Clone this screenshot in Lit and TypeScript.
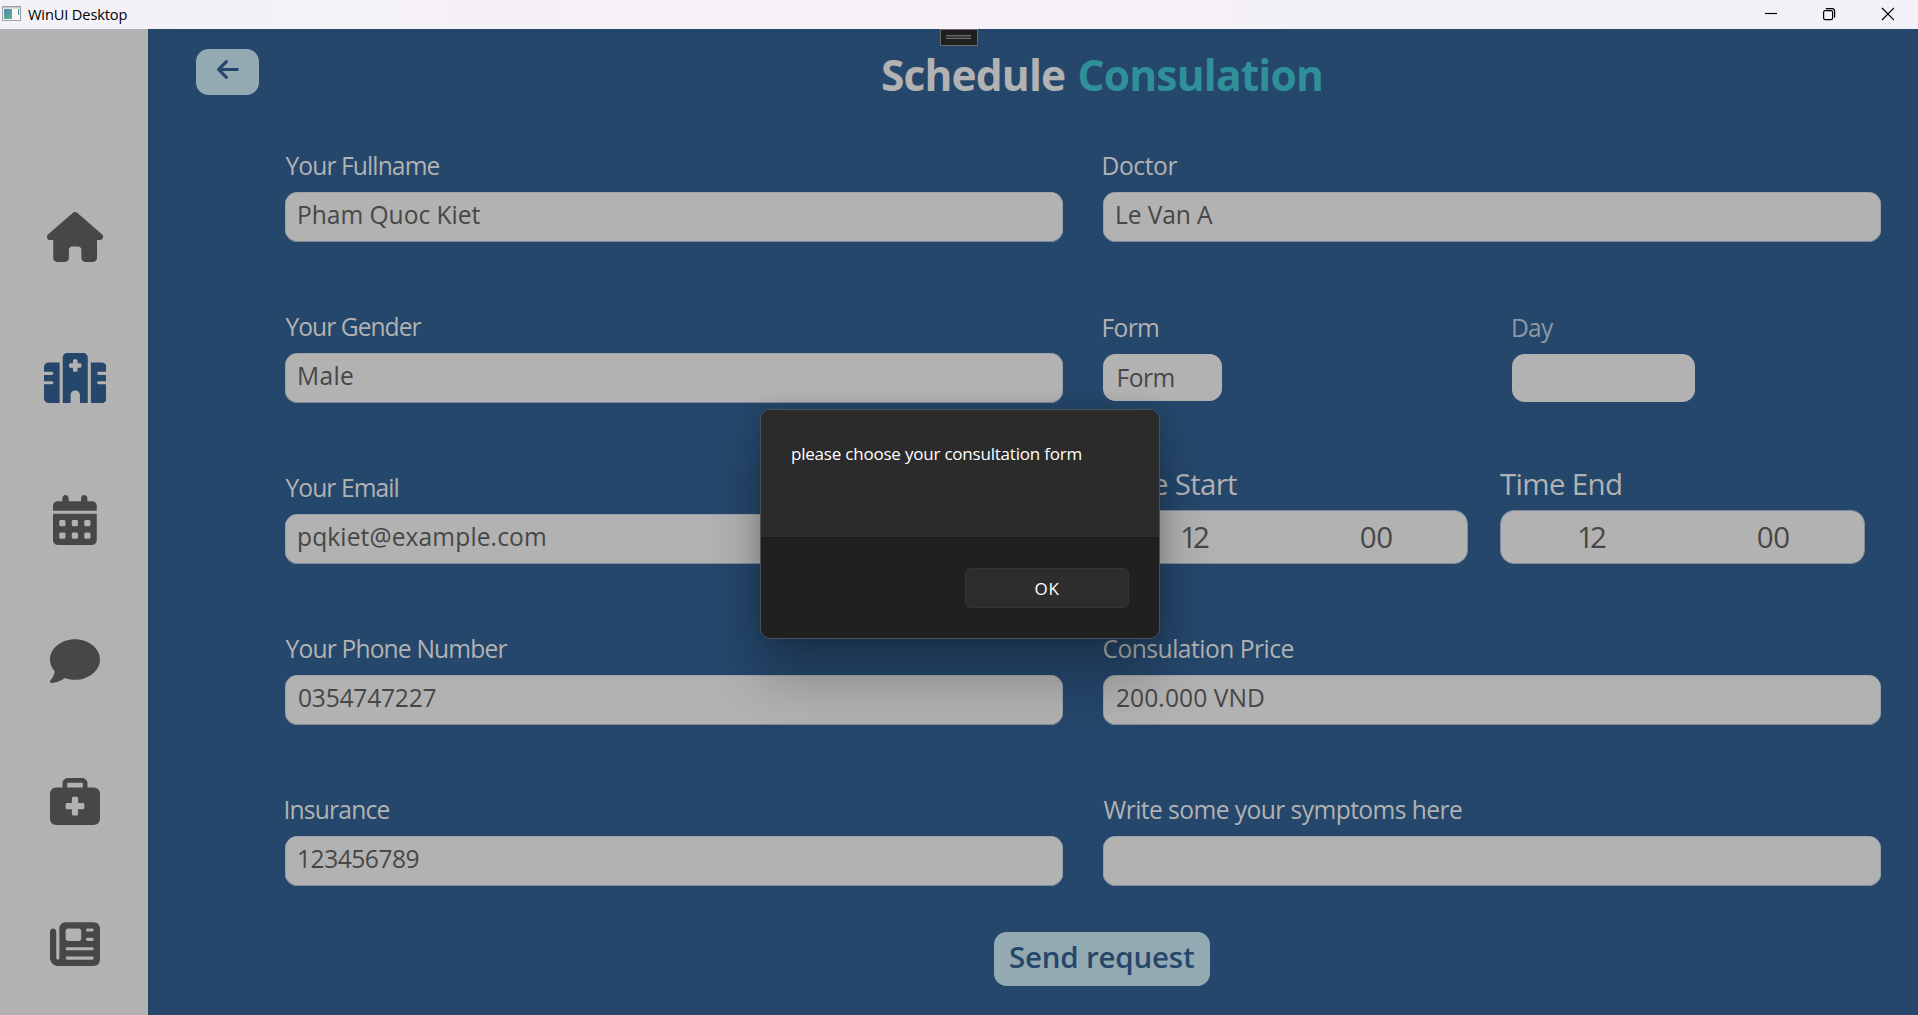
import { LitElement, html, css, svg, nothing } from "lit";

/**
 * A line of text set to a given ink width: the letter spacing is adjusted
 * so that the glyphs run from the left to the right edge of the element.
 */
class FitText extends LitElement {
  static properties = {
    text: { type: String },
    span: { type: Number },
  };
  declare text: string;
  declare span: number;

  static styles = css`
    :host {
      display: block;
      flex: none;
      white-space: pre;
    }
    .run {
      display: inline-block;
    }
  `;

  render() {
    return html`<span class="run">${this.text}</span>`;
  }

  updated() {
    const run = this.renderRoot.querySelector(".run") as HTMLElement;
    const cs = getComputedStyle(this);
    const ctx = document.createElement("canvas").getContext("2d")!;
    ctx.font = `${cs.fontWeight} ${cs.fontSize} ${cs.fontFamily}`;
    const m = ctx.measureText(this.text);
    const ink = m.actualBoundingBoxLeft + m.actualBoundingBoxRight;
    this.style.width = `${this.span}px`;
    run.style.marginLeft = `${m.actualBoundingBoxLeft}px`;
    run.style.letterSpacing = `${(this.span - ink) / Math.max(1, this.text.length - 1)}px`;
  }
}
customElements.define("fit-text", FitText);

const fit = (text: string, span: number) =>
  html`<fit-text .text=${text} .span=${span}></fit-text>`;

interface Icon {
  w: number;
  path: string;
  active?: boolean;
}

const NAV: Icon[] = [
  {
    w: 576,
    path: "M575.8 255.5c0 18-15 32.1-32 32.1h-32l.7 160.2c0 2.7-.2 5.4-.5 8.1V472c0 22.1-17.9 40-40 40H456c-1.1 0-2.2 0-3.3-.1c-1.4 .1-2.8 .1-4.2 .1H416 392c-22.1 0-40-17.9-40-40V448 384c0-17.7-14.3-32-32-32H256c-17.7 0-32 14.3-32 32v64 24c0 22.1-17.9 40-40 40H160 128.1c-1.5 0-3-.1-4.5-.2c-1.2 .1-2.4 .2-3.6 .2H104c-22.1 0-40-17.9-40-40V360c0-.9 0-1.9 .1-2.8V287.6H32c-18 0-32-14-32-32.1c0-9 3-17 10-24L266.4 8c7-7 15-8 22-8s15 2 21 7L564.8 231.5c8 7 12 15 11 24z",
  },
  {
    w: 640,
    active: true,
    path: "M192 48c0-26.5 21.5-48 48-48H400c26.5 0 48 21.5 48 48V512H368V432c0-26.5-21.5-48-48-48s-48 21.5-48 48v80H192V48zM48 96H160V512H48c-26.5 0-48-21.5-48-48V320H80c8.8 0 16-7.2 16-16s-7.2-16-16-16H0V224H80c8.8 0 16-7.2 16-16s-7.2-16-16-16H0V144c0-26.5 21.5-48 48-48zm544 0c26.5 0 48 21.5 48 48v48H560c-8.8 0-16 7.2-16 16s7.2 16 16 16h80v64H560c-8.8 0-16 7.2-16 16s7.2 16 16 16h80V464c0 26.5-21.5 48-48 48H480V96H592zM312 64c-8.8 0-16 7.2-16 16v24H272c-8.8 0-16 7.2-16 16v16c0 8.8 7.2 16 16 16h24v24c0 8.8 7.2 16 16 16h16c8.8 0 16-7.2 16-16V152h24c8.8 0 16-7.2 16-16V120c0-8.8-7.2-16-16-16H344V80c0-8.8-7.2-16-16-16H312z",
  },
  {
    w: 448,
    path: "M128 0c17.7 0 32 14.3 32 32V64H288V32c0-17.7 14.3-32 32-32s32 14.3 32 32V64h48c26.5 0 48 21.5 48 48v48H0V112C0 85.5 21.5 64 48 64H96V32c0-17.7 14.3-32 32-32zM0 192H448V464c0 26.5-21.5 48-48 48H48c-26.5 0-48-21.5-48-48V192zm64 80v32c0 8.8 7.2 16 16 16h32c8.8 0 16-7.2 16-16V272c0-8.8-7.2-16-16-16H80c-8.8 0-16 7.2-16 16zm128 0v32c0 8.8 7.2 16 16 16h32c8.8 0 16-7.2 16-16V272c0-8.8-7.2-16-16-16H208c-8.8 0-16 7.2-16 16zm144-16c-8.8 0-16 7.2-16 16v32c0 8.8 7.2 16 16 16h32c8.8 0 16-7.2 16-16V272c0-8.8-7.2-16-16-16H336zM64 400v32c0 8.8 7.2 16 16 16h32c8.8 0 16-7.2 16-16V400c0-8.8-7.2-16-16-16H80c-8.8 0-16 7.2-16 16zm144-16c-8.8 0-16 7.2-16 16v32c0 8.8 7.2 16 16 16h32c8.8 0 16-7.2 16-16V400c0-8.8-7.2-16-16-16H208zm112 16v32c0 8.8 7.2 16 16 16h32c8.8 0 16-7.2 16-16V400c0-8.8-7.2-16-16-16H336c-8.8 0-16 7.2-16 16z",
  },
  {
    w: 512,
    path: "M512 240c0 114.9-114.6 208-256 208c-37.1 0-72.3-6.4-104.1-17.9c-11.9 8.7-31.3 20.6-54.3 30.6C73.6 471.1 44.7 480 16 480c-6.5 0-12.3-3.9-14.8-9.9c-2.5-6-1.1-12.8 3.4-17.4l0 0 .3-.3c.3-.3 .7-.7 1.3-1.4c1.1-1.2 2.8-3.1 4.9-5.7c4.1-5 9.6-12.4 15.2-21.6c10-16.6 19.5-38.4 21.4-62.9C17.7 326.8 0 285.1 0 240C0 125.1 114.6 32 256 32s256 93.1 256 208z",
  },
  {
    w: 512,
    path: "M184 48H328c4.4 0 8 3.6 8 8V96H176V56c0-4.4 3.6-8 8-8zm-56 8V96H64C28.7 96 0 124.7 0 160V416c0 35.3 28.7 64 64 64H448c35.3 0 64-28.7 64-64V160c0-35.3-28.7-64-64-64H384V56c0-30.9-25.1-56-56-56H184c-30.9 0-56 25.1-56 56zm96 152c0-8.8 7.2-16 16-16h32c8.8 0 16 7.2 16 16v48h48c8.8 0 16 7.2 16 16v32c0 8.8-7.2 16-16 16H288v48c0 8.8-7.2 16-16 16H240c-8.8 0-16-7.2-16-16V320H176c-8.8 0-16-7.2-16-16V272c0-8.8 7.2-16 16-16h48V208z",
  },
  {
    w: 512,
    path: "M96 96c0-35.3 28.7-64 64-64H448c35.3 0 64 28.7 64 64V416c0 35.3-28.7 64-64 64H80c-44.2 0-80-35.8-80-80V128c0-17.7 14.3-32 32-32s32 14.3 32 32V400c0 8.8 7.2 16 16 16s16-7.2 16-16V96zm64 24v80c0 13.3 10.7 24 24 24H296c13.3 0 24-10.7 24-24V120c0-13.3-10.7-24-24-24H184c-13.3 0-24 10.7-24 24zm208-8c0 8.8 7.2 16 16 16h48c8.8 0 16-7.2 16-16s-7.2-16-16-16H384c-8.8 0-16 7.2-16 16zm0 96c0 8.8 7.2 16 16 16h48c8.8 0 16-7.2 16-16s-7.2-16-16-16H384c-8.8 0-16 7.2-16 16zM160 304c0 8.8 7.2 16 16 16H432c8.8 0 16-7.2 16-16s-7.2-16-16-16H176c-8.8 0-16 7.2-16 16zm0 96c0 8.8 7.2 16 16 16H432c8.8 0 16-7.2 16-16s-7.2-16-16-16H176c-8.8 0-16 7.2-16 16z",
  },
];

const ARROW =
  "M9.4 233.4c-12.5 12.5-12.5 32.8 0 45.3l160 160c12.5 12.5 32.8 12.5 45.3 0s12.5-32.8 0-45.3L109.2 288 416 288c17.7 0 32-14.3 32-32s-14.3-32-32-32l-306.7 0L214.6 118.6c12.5-12.5 12.5-32.8 0-45.3s-32.8-12.5-45.3 0l-160 160z";

class AppRoot extends LitElement {
  static styles = css`
    :host {
      display: block;
      position: relative;
      width: 1918px;
      height: 1015px;
      overflow: hidden;
      font-family: "Open Sans", "Noto Sans", sans-serif;
      background: #25476b;
    }
    .window {
      display: flex;
      flex-direction: column;
      height: 100%;
    }
    svg {
      display: block;
      flex: none;
    }

    .titlebar {
      display: flex;
      height: 29px;
      flex: none;
      background: linear-gradient(90deg, #f3f1f8, #f6f1f6 45%, #f6f1f6 62%, #f2f1f8 70%, #f3f1f8);
      color: #000;
      font-size: 14.6px;
      line-height: 29px;
      padding-left: 2px;
    }
    .appicon {
      margin: 6px 7px 0 0;
    }
    .controls {
      margin-left: auto;
      margin-right: 24px;
    }

    .body {
      display: flex;
      flex: 1;
      min-height: 0;
    }
    .sidebar {
      display: flex;
      flex-direction: column;
      align-items: center;
      gap: 91.4px;
      box-sizing: border-box;
      width: 148px;
      flex: none;
      padding: 183px 0 0 2px;
      background: #b2b2b2;
      color: #474747;
    }
    .sidebar .active {
      color: #25476b;
    }

    .main {
      display: flex;
      flex-direction: column;
      flex: 1;
      color: #b2b2b2;
    }
    .header {
      display: flex;
      height: 119px;
      flex: none;
      padding-left: 48px;
    }
    .back {
      display: flex;
      justify-content: center;
      align-items: flex-start;
      box-sizing: border-box;
      width: 63px;
      height: 46px;
      margin-top: 20px;
      padding: 8px 0 0 1px;
      border-radius: 12.5px;
      background: #94aab2;
      color: #25476b;
    }
    .title {
      display: flex;
      gap: 14.5px;
      margin-left: 623px;
      padding-top: 17px;
      font-size: 42.5px;
      line-height: 58px;
      font-weight: 700;
    }
    .accent {
      color: #2f9099;
    }

    .form {
      display: grid;
      grid-template-columns: 778px 778px;
      grid-auto-rows: 94px;
      column-gap: 40px;
      row-gap: 67px;
      padding-left: 137px;
      font-size: 24.6px;
    }
    .cell {
      display: flex;
      flex-direction: column;
      gap: 8px;
    }
    .label {
      height: 36px;
      line-height: 36px;
      padding-left: 0.5px;
    }
    .input {
      box-sizing: border-box;
      height: 50px;
      border-radius: 12.5px;
      background: #b2b2b2;
      color: #474747;
      box-shadow: inset 0 -1px #7c8b9b, inset 0 0 0 0.6px #8795a2;
      line-height: 46px;
      padding-left: 14px;
    }
    .pair {
      display: grid;
      grid-template-columns: 409px 369px;
      padding-top: 1px;
    }
    .pair .input {
      box-shadow: none;
      padding-left: 15.5px;
      line-height: 47px;
    }
    .combo {
      width: 119px;
      height: 47px;
    }
    .date {
      width: 183px;
      height: 48px;
    }
    .dim {
      color: #8d99a5;
      padding-left: 1px;
    }
    .times {
      display: flex;
      gap: 32px;
      font-size: 29.5px;
    }
    .time {
      display: flex;
      flex-direction: column;
      gap: 13px;
    }
    .time .label {
      height: 27px;
      line-height: 27px;
      padding-left: 0;
    }
    .clock {
      display: grid;
      grid-template-columns: 1fr 1fr;
      justify-items: center;
      box-sizing: border-box;
      width: 365px;
      height: 55px;
      border-radius: 14px;
      border: 1px solid #7f8d9b;
      background: #b2b2b2;
      color: #474747;
      line-height: 52px;
      padding-left: 1px;
    }

    .send {
      display: flex;
      justify-content: center;
      width: 216px;
      height: 54px;
      margin: 46px 0 0 846px;
      border-radius: 12.5px;
      background: #94aab2;
      color: #25476b;
      font-size: 29.5px;
      font-weight: 600;
      line-height: 49px;
    }

    .debug {
      position: absolute;
      left: 940px;
      top: 29px;
      box-sizing: border-box;
      width: 38px;
      height: 17px;
      border: 1px solid #6a6a6a;
      background: #1f1f1f;
      padding: 5px;
    }
    .grip {
      height: 1px;
      width: 25px;
      border-top: 1px solid #6a6a6a;
      border-bottom: 1px solid #6a6a6a;
      background: #3a3a3a;
      padding-top: 1px;
    }

    .dialog {
      position: absolute;
      left: 760px;
      top: 409px;
      box-sizing: border-box;
      width: 400px;
      height: 230px;
      border: 1px solid #46515c;
      border-radius: 10px;
      background: #202020;
      background-clip: padding-box;
      overflow: hidden;
      color: #fff;
      font-size: 17px;
    }
    .shade {
      position: absolute;
      left: 761px;
      top: 410px;
      width: 398px;
      height: 228px;
      border-radius: 10px;
      box-shadow: 0 40px 56px rgba(0, 0, 0, 0.25), 0 2px 24px rgba(0, 0, 0, 0.2);
    }
    .message {
      box-sizing: border-box;
      height: 128px;
      padding: 32px 0 0 31px;
      background: #2b2b2b;
      border-bottom: 1px solid #1c1c1c;
      line-height: 24px;
    }
    .actions {
      display: flex;
      justify-content: flex-end;
      padding: 30px 30px 0 0;
    }
    .ok {
      display: flex;
      justify-content: center;
      box-sizing: border-box;
      width: 164px;
      height: 40px;
      border: 1px solid #343434;
      border-radius: 5px;
      background: #2d2d2d;
      line-height: 39px;
      padding-left: 1px;
    }
  `;

  icon(i: Icon, size: number) {
    return html`<svg
      class=${i.active ? "active" : nothing}
      width=${(i.w * size) / 512}
      height=${size}
      viewBox="0 0 ${i.w} 512"
      fill="currentColor"
    >
      ${svg`<path fill-rule="evenodd" d=${i.path} />`}
    </svg>`;
  }

  field(label: string, labelSpan: number, value: string, valueSpan: number) {
    return html`<div class="cell">
      <div class="label">${fit(label, labelSpan)}</div>
      <div class="input">${value ? fit(value, valueSpan) : nothing}</div>
    </div>`;
  }

  time(label: string, span: number) {
    return html`<div class="time">
      <div class="label">${fit(label, span)}</div>
      <div class="clock">${fit("12", 27)}${fit("00", 31.5)}</div>
    </div>`;
  }

  render() {
    return html`
      <div class="window">
        <div class="titlebar">
          <svg class="appicon" width="19" height="15" viewBox="0 0 19 15">
            <defs>
              <linearGradient id="pane" x1="0" y1="0" x2="1" y2="1">
                <stop offset="0" stop-color="#4f86b8" />
                <stop offset="1" stop-color="#5bb57c" />
              </linearGradient>
            </defs>
            <rect x="0.5" y="0.5" width="18" height="14" fill="#f6f8f8" stroke="#9aa0a6" />
            <rect x="1" y="1" width="17" height="1.5" fill="#c3c9cd" />
            <rect x="2" y="3" width="8" height="10" fill="url(#pane)" />
            <rect x="16" y="3" width="1.2" height="6" fill="url(#pane)" />
          </svg>
          ${fit("WinUI Desktop", 99.5)}
          <svg class="controls" width="130" height="29" viewBox="0 0 130 29" fill="none" stroke="#000" stroke-width="1.2">
            <path d="M1 13.5h12" />
            <rect x="59.6" y="10.6" width="9" height="9" rx="1.6" />
            <path d="M61.8 8.6h6.2a2.6 2.6 0 0 1 2.6 2.6v6.4" />
            <path d="M118 8l12 12M130 8l-12 12" />
          </svg>
        </div>
        <div class="body">
          <div class="sidebar">${NAV.map((i) => this.icon(i, 50))}</div>
          <div class="main">
            <div class="header">
              <div class="back">${this.icon({ w: 448, path: ARROW }, 25)}</div>
              <div class="title">
                ${fit("Schedule", 183)}
                <div class="accent">${fit("Consulation", 241.5)}</div>
              </div>
            </div>
            <div class="form">
              ${this.field("Your Fullname", 154, "Pham Quoc Kiet", 181.5)}
              ${this.field("Doctor", 74, "Le Van A", 96)}
              ${this.field("Your Gender", 136, "Male", 54)}
              <div class="pair">
                <div class="cell">
                  <div class="label">${fit("Form", 54.5)}</div>
                  <div class="input combo">${fit("Form", 55)}</div>
                </div>
                <div class="cell">
                  <div class="label dim">${fit("Day", 41)}</div>
                  <div class="input date"></div>
                </div>
              </div>
              ${this.field("Your Email", 113, "pqkiet@example.com", 246)}
              <div class="times">
                ${this.time("Time Start", 134)} ${this.time("Time End", 121)}
              </div>
              ${this.field("Your Phone Number", 222, "0354747227", 136.5)}
              ${this.field("Consulation Price", 190, "200.000 VND", 147)}
              ${this.field("Insurance", 104, "123456789", 119.5)}
              ${this.field("Write some your symptoms here", 358.5, "", 0)}
            </div>
            <div class="send">${fit("Send request", 184)}</div>
          </div>
        </div>
      </div>
      <div class="debug"><div class="grip"></div></div>
      <div class="shade"></div>
      <div class="dialog">
        <div class="message">${fit("please choose your consultation form", 289.5)}</div>
        <div class="actions"><div class="ok">${fit("OK", 24)}</div></div>
      </div>
    `;
  }
}
customElements.define("app-root", AppRoot);
